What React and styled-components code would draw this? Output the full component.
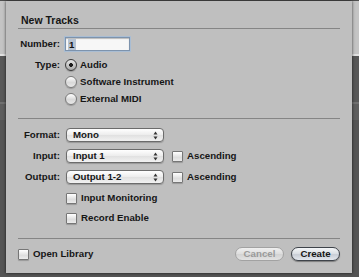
import React from 'react'
import styled, { createGlobalStyle } from 'styled-components'

const GlobalStyle = createGlobalStyle`
  html, body { margin: 0; padding: 0; }
  body {
    width: 359px;
    height: 277px;
    overflow: hidden;
    background: linear-gradient(
      to bottom,
      #4e4e4e 0 1px,
      #c4c4c4 1px 54px,
      #e2e2e2 54px 56px,
      #585858 56px 102px,
      #707070 102px 104px,
      #5e5e5e 104px 120px,
      #545454 120px
    );
    font-family: "Liberation Sans", Arial, sans-serif;
    color: #161616;
  }
`

const Page = styled.div`
  display: flex;
  padding: 1px 7px 0 6px;
`

const Dialog = styled.div`
  width: 346px;
  height: 272px;
  box-sizing: border-box;
  padding: 0 12px;
  background: #bfbfbf;
  box-shadow: 0 0 3px rgba(0, 0, 0, 0.7);
  display: flex;
  flex-direction: column;
`

const Header = styled.div`
  height: 28px;
  box-sizing: border-box;
  padding: 12px 0 0 3px;
  font-size: 10.5px;
  line-height: 14px;
  font-weight: 700;
  border-bottom: 1px solid #858585;
`

const Section = styled.div`
  display: flex;
  flex-direction: column;
  gap: ${p => p.$gap}px;
  padding: ${p => p.$top}px 0 ${p => p.$bottom}px;
  border-bottom: 1px solid #858585;
`

const Row = styled.div`
  display: flex;
  align-items: ${p => (p.$top ? 'flex-start' : 'center')};
  height: ${p => (p.$top ? 'auto' : '14px')};
  margin-top: ${p => p.$shift || 0}px;
`

const Label = styled.div`
  width: 42px;
  margin-right: 5px;
  text-align: right;
  font-size: 9.7px;
  font-weight: 700;
  line-height: ${p => p.$lh || 14}px;
  white-space: nowrap;
`

const Text = styled.span`
  font-size: 9.7px;
  font-weight: 700;
  line-height: 14px;
  white-space: nowrap;
  color: ${p => (p.$dim ? '#9a9a9a' : '#161616')};
`

const TextField = styled.div`
  width: 65px;
  height: 14px;
  box-sizing: border-box;
  border: 1px solid #7d93ad;
  box-shadow: 0 0 0 1px #a9bdd3, inset 0 1px 1px rgba(0, 0, 0, 0.25);
  background: #f7f7f7;
  padding: 0 0 0 2px;
  display: flex;
  align-items: center;
`

const Selection = styled.span`
  background: #b7c3d2;
  padding: 0 2px 0 1px;
  font-size: 9.7px;
  font-weight: 700;
  line-height: 11px;
`

const RadioGroup = styled.div`
  display: flex;
  flex-direction: column;
`

const RadioRow = styled.div`
  display: flex;
  align-items: center;
  height: 17px;
  gap: 3px;
`

const Radio = styled.span`
  width: 12px;
  height: 12px;
  box-sizing: border-box;
  border-radius: 50%;
  border: 1px solid ${p => (p.$on ? '#3c3c3c' : '#7a7a7a')};
  background: ${p =>
    p.$on
      ? 'radial-gradient(circle, #1c1c1c 0 1.6px, transparent 2.2px), linear-gradient(#e6e6e6, #a9a9a9)'
      : 'linear-gradient(#ffffff, #d9d9d9 55%, #e8e8e8)'};
  box-shadow: 0 1px 1px rgba(0, 0, 0, 0.2);
`

const Popup = styled.div`
  width: 98px;
  height: 14px;
  margin-left: 1px;
  box-sizing: border-box;
  border: 1px solid #6c6c6c;
  border-radius: 4px;
  background: linear-gradient(#ffffff, #ececec 50%, #e0e0e0 50%, #f2f2f2);
  box-shadow: 0 1px 1px rgba(0, 0, 0, 0.2);
  display: flex;
  align-items: center;
  justify-content: space-between;
  padding: 0 5px 0 6px;
`

const Check = styled.span`
  width: 11px;
  height: 11px;
  box-sizing: border-box;
  margin-left: ${p => p.$left || 0}px;
  margin-right: 4px;
  border: 1px solid #767676;
  border-radius: 1px;
  background: linear-gradient(#ffffff, #dedede 60%, #ebebeb);
  box-shadow: 0 1px 1px rgba(0, 0, 0, 0.2);
  flex: none;
`

const Footer = styled.div`
  flex: 1;
  display: flex;
  align-items: center;
  padding-bottom: 4px;
`

const Buttons = styled.div`
  margin-left: auto;
  display: flex;
  gap: 7px;
`

const Button = styled.div`
  width: 49px;
  height: 14px;
  box-sizing: border-box;
  border-radius: 7px;
  border: 1px solid ${p => (p.$primary ? '#3e434a' : '#a2a2a2')};
  background: ${p =>
    p.$primary
      ? 'linear-gradient(#f4f6f8, #dde1e6 45%, #c9ced6 55%, #e4e8ee)'
      : 'linear-gradient(#f0f0f0, #dddddd 50%, #d2d2d2 50%, #e2e2e2)'};
  box-shadow: ${p => (p.$primary ? '0 1px 1px rgba(0,0,0,0.35)' : 'none')};
  display: flex;
  align-items: center;
  justify-content: center;
`

function Arrows() {
  return (
    <svg width="5" height="9" viewBox="0 0 5 9">
      <path d="M2.5 0.5 L4.5 3.5 L0.5 3.5 Z" fill="#333" />
      <path d="M2.5 8.5 L4.5 5.5 L0.5 5.5 Z" fill="#333" />
    </svg>
  )
}

function Select({ value }) {
  return (
    <Popup>
      <Text>{value}</Text>
      <Arrows />
    </Popup>
  )
}

function CheckOption({ label, left }) {
  return (
    <>
      <Check $left={left} />
      <Text>{label}</Text>
    </>
  )
}

export default function App() {
  return (
    <Page>
      <GlobalStyle />
      <Dialog>
        <Header>New Tracks</Header>

        <Section $gap={5} $top={8} $bottom={11}>
          <Row>
            <Label>Number:</Label>
            <TextField>
              <Selection>1</Selection>
            </TextField>
          </Row>
          <Row $top>
            <Label $lh={17}>Type:</Label>
            <RadioGroup>
              <RadioRow>
                <Radio $on />
                <Text>Audio</Text>
              </RadioRow>
              <RadioRow>
                <Radio />
                <Text>Software Instrument</Text>
              </RadioRow>
              <RadioRow>
                <Radio />
                <Text>External MIDI</Text>
              </RadioRow>
            </RadioGroup>
          </Row>
        </Section>

        <Section $gap={7} $top={9} $bottom={13}>
          <Row>
            <Label>Format:</Label>
            <Select value="Mono" />
          </Row>
          <Row>
            <Label>Input:</Label>
            <Select value="Input 1" />
            <CheckOption label="Ascending" left={8} />
          </Row>
          <Row>
            <Label>Output:</Label>
            <Select value="Output 1-2" />
            <CheckOption label="Ascending" left={8} />
          </Row>
          <Row>
            <Label />
            <CheckOption label="Input Monitoring" left={1} />
          </Row>
          <Row $shift={-1}>
            <Label />
            <CheckOption label="Record Enable" left={1} />
          </Row>
        </Section>

        <Footer>
          <CheckOption label="Open Library" />
          <Buttons>
            <Button>
              <Text $dim>Cancel</Text>
            </Button>
            <Button $primary>
              <Text>Create</Text>
            </Button>
          </Buttons>
        </Footer>
      </Dialog>
    </Page>
  )
}
